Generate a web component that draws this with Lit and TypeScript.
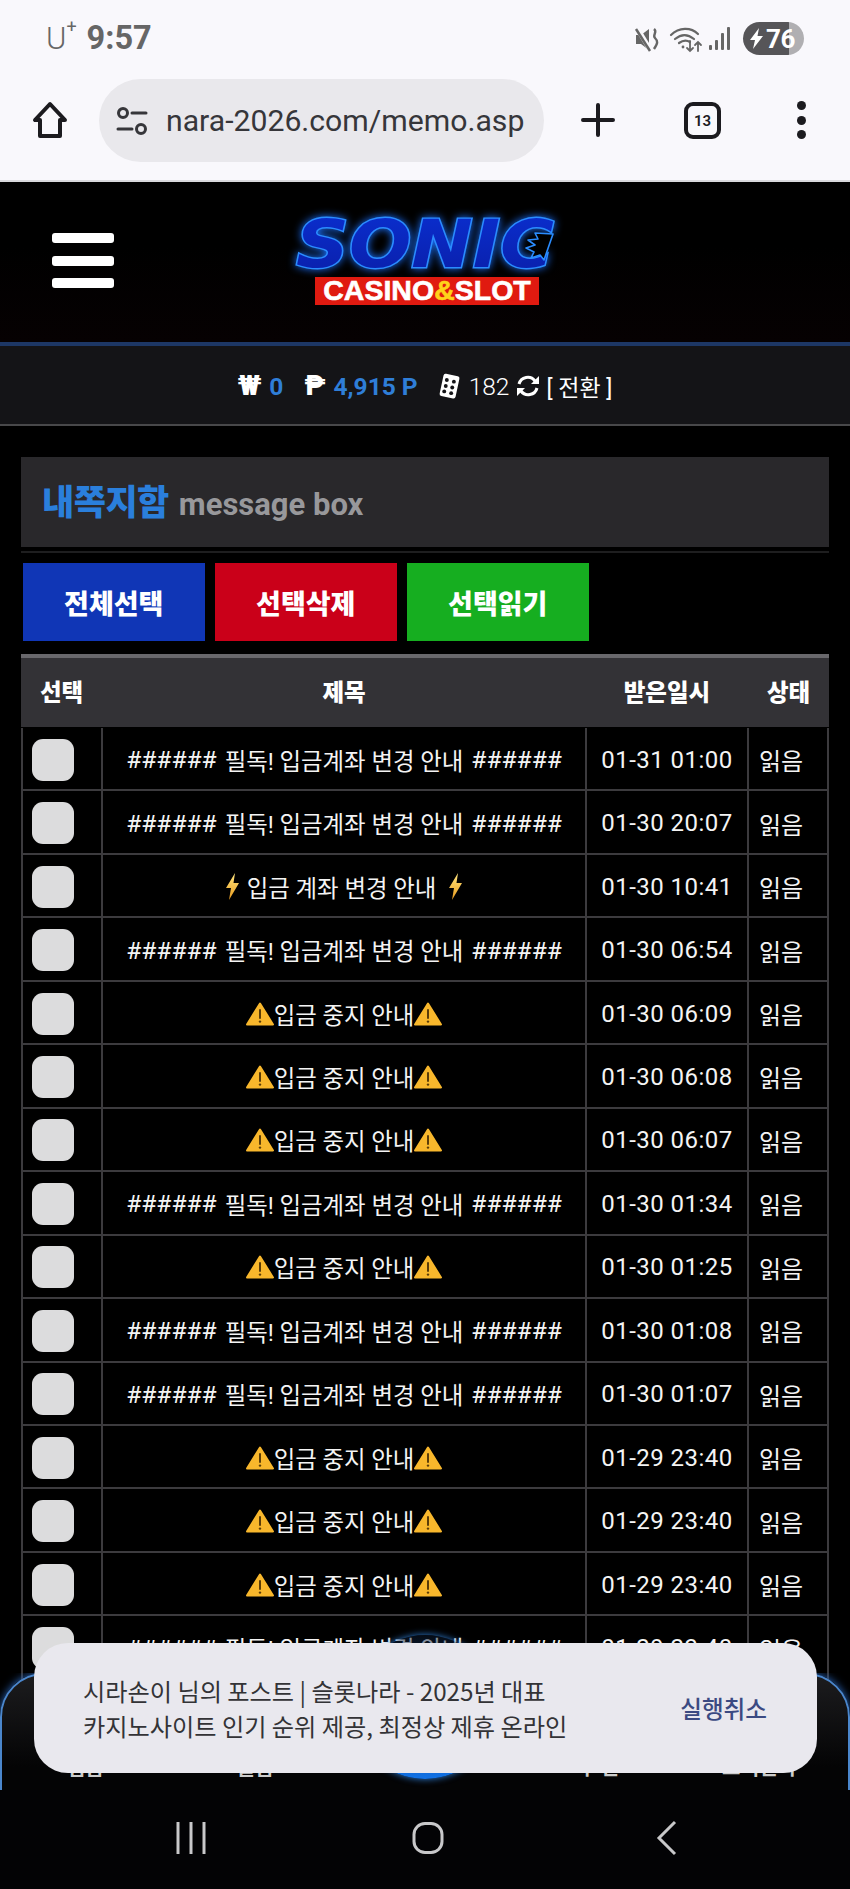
import { LitElement, html, css, svg } from "lit";
import { customElement } from "lit/decorators.js";

type Kind = "notice" | "bolt" | "warn";
interface Row { kind: Kind; date: string; }

const ROWS: Row[] = [
  { kind: "notice", date: "01-31 01:00" },
  { kind: "notice", date: "01-30 20:07" },
  { kind: "bolt", date: "01-30 10:41" },
  { kind: "notice", date: "01-30 06:54" },
  { kind: "warn", date: "01-30 06:09" },
  { kind: "warn", date: "01-30 06:08" },
  { kind: "warn", date: "01-30 06:07" },
  { kind: "notice", date: "01-30 01:34" },
  { kind: "warn", date: "01-30 01:25" },
  { kind: "notice", date: "01-30 01:08" },
  { kind: "notice", date: "01-30 01:07" },
  { kind: "warn", date: "01-29 23:40" },
  { kind: "warn", date: "01-29 23:40" },
  { kind: "warn", date: "01-29 23:40" },
  { kind: "notice", date: "01-29 23:40" },
];

const warnIcon = svg`<svg class="warn" viewBox="0 0 28 24"><path d="M14 1.5 27 22.5H1Z" fill="#f8b72c" stroke="#f8b72c" stroke-width="2" stroke-linejoin="round"/><path d="M14 8v8" stroke="#5a3c08" stroke-width="2" stroke-linecap="round"/><circle cx="14" cy="19.6" r="1.2" fill="#5a3c08"/></svg>`;
const boltIcon = svg`<svg class="bolt" viewBox="0 0 13 27"><defs><linearGradient id="bg" x1="0" y1="0" x2="0" y2="1"><stop offset="0" stop-color="#ffe680"/><stop offset="1" stop-color="#e89a1c"/></linearGradient></defs><path d="M9 0 0 15h5L3 27 13 10H7.5Z" fill="url(#bg)"/></svg>`;

@customElement("app-root")
export class AppRoot extends LitElement {
  static styles = css`
    :host {
      display: block; position: relative; width: 850px; height: 1889px; overflow: hidden;
      background: #000; color: #fff;
      font-family: Roboto, "Noto Sans CJK KR", sans-serif;
    }
    * { box-sizing: border-box; }
    .chrome { height: 182px; background: #f9f8fc; border-bottom: 2px solid #d9d9dc; display: flex; flex-direction: column; }
    .status { height: 79px; padding: 0 46px 2px 46px; display: flex; align-items: center; justify-content: space-between; }
    .status-left { display: flex; align-items: center; color: #666; gap: 10px; }
    .carrier { font-size: 31px; font-weight: 300; display: flex; line-height: 1; }
    .carrier sup { font-size: 18px; line-height: 1; margin-top: -5px; font-weight: 400; }
    .clock { font-size: 32.5px; font-weight: 700; line-height: 1; }
    .status-right { display: flex; align-items: center; }
    .status-right svg { display: block; }
    .ic-mute { width: 26px; height: 30px; margin-right: 9px; }
    .ic-wifi { width: 34px; height: 30px; margin-right: 6px; }
    .ic-sig { width: 22px; height: 30px; margin-right: 12px; }
    .batt {
      width: 61px; height: 33px; border-radius: 17px; display: flex; align-items: center; overflow: hidden;
      background: linear-gradient(90deg, #565558 0 76%, #b0afb2 76%);
      color: #fff; font-weight: 700; font-size: 26px; line-height: 1; padding-left: 7px; gap: 2px;
      letter-spacing: -0.5px;
    }
    .batt svg { width: 14px; height: 21px; flex: none; }
    .toolbar { flex: 1; display: flex; align-items: flex-start; position: relative; }
    .home { width: 38px; height: 38px; margin: 22px 0 0 31px; flex: none; }
    .pill {
      width: 445px; height: 83px; border-radius: 42px; background: #e9e8ec; margin-left: 30px;
      display: flex; align-items: center; padding-left: 17px; color: #36363a; font-size: 30.2px; flex: none; white-space: nowrap;
    }
    .pill svg { width: 32px; height: 32px; margin-right: 18px; flex: none; }
    .plus { width: 34px; height: 34px; margin: 24px 0 0 37px; flex: none; }
    .tabs {
      width: 37px; height: 37px; margin: 23px 0 0 69px; border: 4px solid #1c1b1f; border-radius: 9px; flex: none;
      display: flex; align-items: center; justify-content: center; font-size: 15px; font-weight: 600; color: #1c1b1f;
    }
    .dots { width: 10px; height: 38px; margin: 22px 0 0 75px; flex: none; display: flex; flex-direction: column; justify-content: space-between; align-items: center; }
    .dots i { width: 9px; height: 9px; border-radius: 50%; background: #1c1b1f; display: block; }

    .header {
      height: 160px; display: grid; grid-template-columns: 1fr auto 1fr; align-items: center;
      background: linear-gradient(180deg, #000 40%, #060102 100%);
    }
    .burger { margin-left: 52px; width: 62px; display: flex; flex-direction: column; gap: 12.5px; justify-self: start; margin-top: -3px; }
    .burger i { display: block; height: 10px; border-radius: 3px; background: #fff; }
    .logo { width: 272px; display: flex; flex-direction: column; align-items: center; margin-top: -6px; margin-left: 4px; }
    .logo svg { display: block; overflow: visible; }
    .sonic { font-family: "DejaVu Sans", sans-serif; font-weight: 700; font-style: italic; font-size: 66px; }
    .sonic-fx { filter: drop-shadow(0 0 4px #1a70ff); }
    .tag {
      width: 224px; height: 28px; background: #e01a10; margin-top: 5px; display: flex; align-items: center; justify-content: center;
      font-family: "Liberation Sans", sans-serif; font-weight: 700; font-size: 28.5px; line-height: 1; color: #fff; white-space: nowrap;
      -webkit-text-stroke: 0.6px #fff;
    }
    .tag b { color: #ffd21a; -webkit-text-stroke: 0.6px #ffd21a; }

    .bal {
      height: 84px; background: #141417; border-top: 4px solid #1d3765; border-bottom: 2px solid #48484a;
      display: flex; align-items: center; justify-content: center; font-size: 24px; color: #fff; white-space: nowrap; padding-top: 2px;
    }
    .bal .sym { font-weight: 900; font-size: 28px; line-height: 1; }
    .bal .num { color: #2f7ed8; font-weight: 700; font-size: 24.5px; }
    .bal .w-val { margin-left: 8px; margin-right: 21px; }
    .bal .p-val { margin-left: 8px; margin-right: 18px; }
    .bal svg { display: block; flex: none; }
    .dice { width: 26px; height: 26px; margin-right: 7px; }
    .cnt { font-weight: 300; font-size: 24.5px; }
    .sync { width: 24px; height: 24px; margin: 0 6px 0 7px; }
    .conv { font-weight: 400; font-size: 23px; }

    .main { padding: 31px 21px 0 21px; }
    .title {
      height: 90px; background: #29282b; display: flex; align-items: baseline; padding: 26px 0 0 21px; gap: 10px; white-space: nowrap;
    }
    .title strong { color: #2a7fdc; font-size: 35px; font-weight: 900; letter-spacing: -0.5px; line-height: 1.2; }
    .title span { color: #98989b; font-size: 31px; font-weight: 700; line-height: 1.2; }
    .rule { height: 2px; background: #1e1e1f; margin-top: 4px; }
    .btns { display: flex; gap: 10.5px; padding: 10px 0 0 2px; }
    .btn {
      width: 181.5px; height: 78px; display: flex; align-items: center; justify-content: center;
      font-size: 27px; font-weight: 900; color: #fff; font-family: "Noto Sans CJK KR", sans-serif;
    }
    .blue { background: #1036b6; }
    .red { background: #ca0019; }
    .green { background: #16ae20; }

    .list { margin-top: 13px; width: 808px; }
    .thead {
      height: 73px; margin-bottom: 1px; padding-bottom: 3px; border-top: 4px solid #69686c; background: #333236;
      display: grid; grid-template-columns: 81px 484px 162px 81px; align-items: center;
      font-size: 23.5px; font-weight: 900; font-family: "Noto Sans CJK KR", sans-serif; text-align: center;
    }
    .row {
      height: 63.46px; display: grid; grid-template-columns: 80px 484px 162px 80px;
      border-bottom: 2px solid #3c3b3e; border-left: 2px solid #3c3b3e;
    }
    .cell {
      display: flex; align-items: center; justify-content: center; border-right: 2px solid #3c3b3e;
      font-size: 23.4px; white-space: nowrap; color: #f4f4f4; padding-top: 2px;
    }
    .cell.sel { justify-content: flex-start; padding-left: 9px; }
    .cell.date { font-size: 24px; letter-spacing: 0.45px; }
    .cell.state { justify-content: flex-start; padding-left: 10px; font-size: 24px; }
    .check { width: 42px; height: 42px; border-radius: 11px; background: #dcdcdd; }
    .warn { width: 28px; height: 24px; flex: none; display: block; }
    .bolt { width: 13px; height: 27px; flex: none; display: block; }
    .gap-l { margin-left: 8px; }
    .gap-r { margin-right: 13px; }
    .notice { display: flex; align-items: center; gap: 8px; }
    .hash { font-size: 24.5px; }

    .dock { position: absolute; left: 0; right: 0; top: 1673px; height: 117px; overflow: hidden; }
    .dock-panel {
      position: absolute; left: 0; right: 0; top: 0; bottom: -40px; border-radius: 44px 44px 0 0;
      background: linear-gradient(180deg, #1c1c1e, #040405 60%);
      border: 2px solid #4a86cc; box-shadow: 0 0 8px #2a68c0;
    }
    .dock-labels {
      position: absolute; left: 0; right: 0; top: 79px; display: flex; font-size: 20px; line-height: 30px; color: #ccc; font-weight: 700;
      padding-left: 67px; font-family: "Noto Sans CJK KR", sans-serif;
    }
    .dock-labels span:nth-child(1) { width: 170px; }
    .dock-labels span:nth-child(2) { width: 341px; }
    .dock-labels span:nth-child(3) { width: 144px; letter-spacing: 5px; }
    .orb {
      position: absolute; left: 353px; top: 1635px; width: 144px; height: 144px; border-radius: 50%;
      background: linear-gradient(180deg, rgba(12, 26, 48, 0.45) 0%, #1272e6 100%);
      box-shadow: 0 0 7px #2f7fd8;
    }
    .toast {
      position: absolute; left: 34px; top: 1643px; width: 783px; height: 130px; border-radius: 34px;
      background: #e9e8ee; color: #333336; display: flex; align-items: center; justify-content: space-between;
      padding: 0 50px 0 49px; font-family: "Noto Sans CJK KR", sans-serif;
    }
    .toast p { margin: 0; font-size: 24.2px; line-height: 35px; white-space: nowrap; }
    .undo { color: #3b4a82; font-size: 23.6px; font-weight: 500; white-space: nowrap; }
    .sysnav {
      position: absolute; left: 0; right: 0; top: 1790px; bottom: 0; background: #030305;
      display: grid; grid-template-columns: 176px 30px 206px 32px 213px 20px; padding-top: 32px; align-items: start;
    }
    .sysnav svg { display: block; grid-row: 1; height: 32px; width: 100%; overflow: visible; }
    .sysnav .a { grid-column: 2; }
    .sysnav .b { grid-column: 4; }
    .sysnav .c { grid-column: 6; }
  `;

  private title(kind: Kind) {
    if (kind === "warn") return html`${warnIcon}<span>입금 중지 안내</span>${warnIcon}`;
    if (kind === "bolt") return html`${boltIcon}<span class="gap-l gap-r">입금 계좌 변경 안내</span>${boltIcon}`;
    return html`<div class="notice"><span class="hash">######</span><span>필독! 입금계좌 변경 안내</span><span class="hash">######</span></div>`;
  }

  render() {
    return html`
      <div class="chrome">
        <div class="status">
          <div class="status-left">
            <span class="carrier">U<sup>+</sup></span>
            <span class="clock">9:57</span>
          </div>
          <div class="status-right">
            <svg class="ic-mute" viewBox="0 0 26 30" fill="none">
              <path d="M2 11h5l8-6v21l-8-6H2Z" fill="#666"/>
              <path d="M3 4 17 27" stroke="#f9f8fc" stroke-width="5"/>
              <path d="M2 5 16 27" stroke="#666" stroke-width="2.5"/>
              <path d="M20 5c4 3-2 6 1 9s3 5-1 11" stroke="#666" stroke-width="2.4"/>
            </svg>
            <svg class="ic-wifi" viewBox="0 0 34 30" fill="none" stroke="#666" stroke-width="2.2" stroke-linecap="round">
              <path d="M2 11C10 3 22 3 29 10"/>
              <path d="M6 15c6-5 13-5 19 0"/>
              <path d="M10 19c4-3 8-3 11-1"/>
              <circle cx="14" cy="23" r="1.4" fill="#666" stroke="none"/>
              <path d="M21 17v10m-3-3 3 3 3-3M29 27V18m-3 3 3-3 3 3" stroke-width="1.8"/>
            </svg>
            <svg class="ic-sig" viewBox="0 0 22 30" fill="#666">
              <rect x="0" y="21" width="3" height="5" rx="1"/>
              <rect x="6" y="16" width="3" height="10" rx="1"/>
              <rect x="12" y="9" width="3" height="17" rx="1"/>
              <rect x="18" y="3" width="3" height="23" rx="1"/>
            </svg>
            <div class="batt">
              <svg viewBox="0 0 14 21" fill="#fff"><path d="M9 0 0 12h5l-2 9 10-13H7.5Z"/></svg>
              <span>76</span>
            </div>
          </div>
        </div>
        <div class="toolbar">
          <svg class="home" viewBox="0 0 38 38" fill="none" stroke="#1c1b1f" stroke-width="4" stroke-linejoin="round">
            <path d="M19 3 4 19h5v16h20V19h5Z"/>
          </svg>
          <div class="pill">
            <svg viewBox="0 0 32 32" fill="none" stroke="#36363a" stroke-width="3" stroke-linecap="round">
              <circle cx="7" cy="8" r="4.5"/><path d="M16 8h14M2 24h14"/><circle cx="25" cy="24" r="4.5"/>
            </svg>
            <span>nara-2026.com/memo.asp</span>
          </div>
          <svg class="plus" viewBox="0 0 34 34" stroke="#1c1b1f" stroke-width="4" stroke-linecap="round"><path d="M17 2v30M2 17h30"/></svg>
          <div class="tabs">13</div>
          <div class="dots"><i></i><i></i><i></i></div>
        </div>
      </div>

      <div class="header">
        <div class="burger"><i></i><i></i><i></i></div>
        <div class="logo">
          <svg width="264" height="58" viewBox="0 0 264 58">
            <defs>
              <linearGradient id="sf" x1="0" y1="0" x2="0" y2="1">
                <stop offset="0" stop-color="#0a2fd0"/><stop offset="1" stop-color="#0a1ea8"/>
              </linearGradient>
            </defs>
            <g class="sonic-fx">
              <text class="sonic" x="1" y="53" textLength="258" lengthAdjust="spacingAndGlyphs" fill="url(#sf)" stroke="#2a8cff" stroke-width="2.8" paint-order="stroke">SONIC</text>
            </g>
            <path d="M258 20 240 19l3 6-10 1 7 5-9 3 8 4-3 6 9-3 4 5 9-26Z" fill="#000" stroke="#2a8cff" stroke-width="1.6" stroke-linejoin="round"/>
          </svg>
          <div class="tag"><span>CASINO<b>&amp;</b>SLOT</span></div>
        </div>
        <div></div>
      </div>

      <div class="bal">
        <span class="sym">₩</span><span class="num w-val">0</span>
        <span class="sym">₱</span><span class="num p-val">4,915 P</span>
        <svg class="dice" viewBox="0 0 24 24">
          <rect x="5" y="1.5" width="15" height="21" rx="2" fill="#fff" transform="rotate(12 12 12)"/>
          <g fill="#141417"><circle cx="10" cy="6.5" r="1.8"/><circle cx="16.5" cy="8" r="1.8"/><circle cx="9" cy="12" r="1.8"/><circle cx="15" cy="13.4" r="1.8"/><circle cx="7.6" cy="17" r="1.8"/><circle cx="14" cy="18.6" r="1.8"/></g>
        </svg>
        <span class="cnt">182</span>
        <svg class="sync" viewBox="0 0 24 24" fill="none" stroke="#fff" stroke-width="3">
          <path d="M3 10a9 9 0 0 1 16-3"/><path d="M21 14a9 9 0 0 1-16 3"/>
          <path d="M23 2v8h-8Z" fill="#fff" stroke="none"/><path d="M1 22v-8h8Z" fill="#fff" stroke="none"/>
        </svg>
        <span class="conv">[ 전환 ]</span>
      </div>

      <div class="main">
        <div class="title"><strong>내쪽지함</strong><span>message box</span></div>
        <div class="rule"></div>
        <div class="btns">
          <div class="btn blue">전체선택</div>
          <div class="btn red">선택삭제</div>
          <div class="btn green">선택읽기</div>
        </div>
        <div class="list">
          <div class="thead"><span>선택</span><span>제목</span><span>받은일시</span><span>상태</span></div>
          ${ROWS.map((r) => html`
            <div class="row">
              <div class="cell sel"><div class="check"></div></div>
              <div class="cell">${this.title(r.kind)}</div>
              <div class="cell date">${r.date}</div>
              <div class="cell state">읽음</div>
            </div>`)}
        </div>
      </div>

      <div class="dock">
        <div class="dock-panel"></div>
        <div class="dock-labels"><span>입금</span><span>출금</span><span>쿠폰</span><span>고객센터</span></div>
      </div>
      <div class="orb"></div>
      <div class="toast">
        <p>시라손이 님의 포스트 | 슬롯나라 - 2025년 대표<br />카지노사이트 인기 순위 제공, 최정상 제휴 온라인</p>
        <span class="undo">실행취소</span>
      </div>
      <div class="sysnav">
        <svg class="a" viewBox="0 0 30 32" stroke="#c8c8ca" stroke-width="3"><path d="M2 0v32M15 0v32M28 0v32"/></svg>
        <svg class="b" viewBox="0 0 32 32" fill="none" stroke="#c8c8ca" stroke-width="3"><rect x="2" y="1.5" width="28" height="29" rx="11"/></svg>
        <svg class="c" viewBox="0 0 20 32" fill="none" stroke="#c8c8ca" stroke-width="3"><path d="M18 0 2 16l16 16"/></svg>
      </div>
    `;
  }
}
